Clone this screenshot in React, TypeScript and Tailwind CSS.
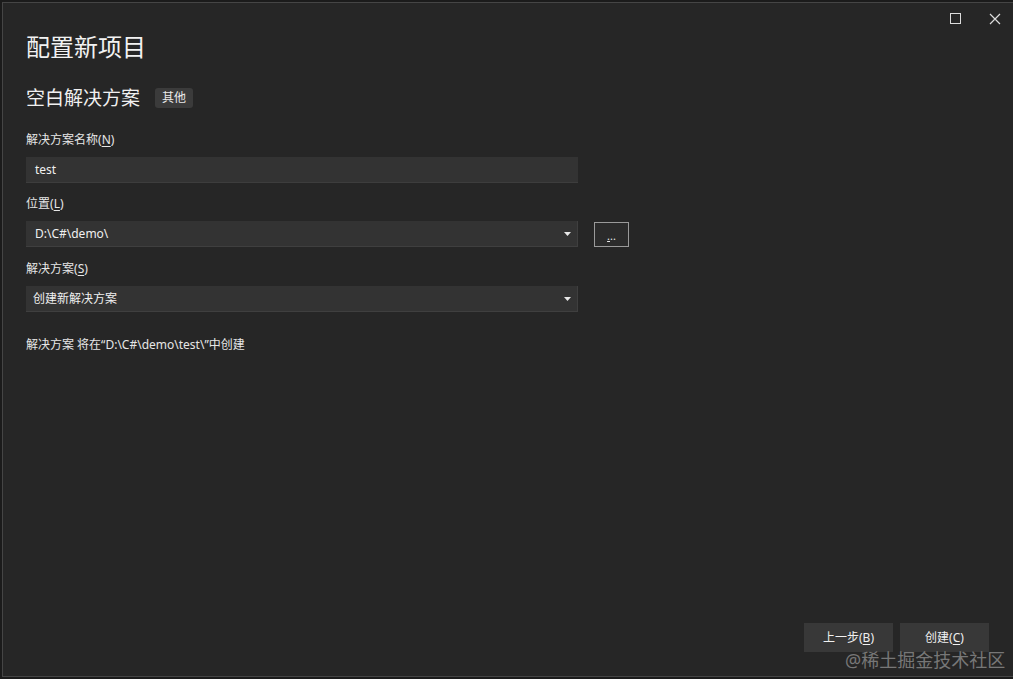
import React from "react";

const font = { fontFamily: '"Noto Sans", "Noto Sans CJK SC", sans-serif' };

function Caret() {
  return (
    <svg width="7" height="4" viewBox="0 0 7 4" className="mr-[6px]">
      <path d="M0 0 H7 L3.5 4 Z" fill="#e8e8e8" />
    </svg>
  );
}

function Label({ children, u }: { children: React.ReactNode; u: string }) {
  return (
    <div className="text-[12px] leading-[16px] text-[#e6e6e6]">
      {children}(<span className="underline underline-offset-2">{u}</span>)
    </div>
  );
}

export default function App() {
  return (
    <div className="w-[1013px] h-[679px] bg-[#1b1b1b] overflow-hidden relative" style={font}>
      <div className="ml-[2px] mt-[2px] h-[675px] w-[1011px] bg-[#262626] border-t border-l border-b border-[#454545] flex flex-col">
        <div className="h-[28px] flex justify-end items-center pr-[12px] gap-[28px] shrink-0">
          <div className="w-[11px] h-[11px] border border-[#dcdcdc] mt-[3px]" />
          <svg width="12" height="12" viewBox="0 0 12 12" className="mt-[3px]">
            <path d="M1 1 L11 11 M11 1 L1 11" stroke="#dcdcdc" strokeWidth="1.2" />
          </svg>
        </div>
        <div className="pl-[23px] flex flex-col flex-1">
          <div className="text-[24px] leading-[32px] text-[#f2f2f2]">配置新项目</div>
          <div className="mt-[21px] flex items-center h-[28px]">
            <span className="text-[19px] leading-[28px] text-[#f0f0f0]">空白解决方案</span>
            <span className="ml-[15px] h-[20px] px-[7px] flex items-center rounded-[3px] bg-[#3b3b3b] text-[12px] text-[#eaeaea]">
              其他
            </span>
          </div>
          <div className="mt-[20px]">
            <Label u="N">解决方案名称</Label>
          </div>
          <div className="mt-[9px] w-[552px] h-[26px] bg-[#333333] border-b border-[#3d3d3d] flex items-center pl-[9px] text-[12px] text-[#f0f0f0]">
            test
          </div>
          <div className="mt-[13px]">
            <Label u="L">位置</Label>
          </div>
          <div className="mt-[9px] flex items-center">
            <div className="w-[552px] h-[26px] bg-[#333333] border-b border-r border-[#3f3f3f] flex items-center justify-between pl-[9px] text-[12px] text-[#f0f0f0]">
              <span>D:\C#\demo\</span>
              <Caret />
            </div>
            <div className="ml-[16px] w-[35px] h-[25px] border border-[#9a9a9a] bg-[#2b2b2b] flex items-center justify-center text-[11px] leading-none text-[#e8e8e8]">
              <span className="mt-[2px]">
                <span className="underline underline-offset-1">.</span>..
              </span>
            </div>
          </div>
          <div className="mt-[14px]">
            <Label u="S">解决方案</Label>
          </div>
          <div className="mt-[9px] w-[552px] h-[26px] bg-[#333333] border-b border-r border-[#3f3f3f] flex items-center justify-between pl-[7px] text-[12px] text-[#f0f0f0]">
            <span>创建新解决方案</span>
            <Caret />
          </div>
          <div className="mt-[25px] text-[12px] leading-[16px] text-[#e6e6e6]">
            解决方案 将在“D:\C#\demo\test\”中创建
          </div>
          <div className="flex-1" />
          <div className="flex justify-end gap-[7px] pr-[24px] pb-[24px]">
            <div className="w-[89px] h-[29px] bg-[#383838] flex items-center justify-center text-[12px] text-[#f0f0f0]">
              上一步(<span className="underline underline-offset-2">B</span>)
            </div>
            <div className="w-[89px] h-[29px] bg-[#383838] flex items-center justify-center text-[12px] text-[#f0f0f0]">
              创建(<span className="underline underline-offset-2">C</span>)
            </div>
          </div>
        </div>
      </div>
      <div className="absolute left-[845px] top-[648px] text-[18px] leading-[24px] text-[#9a9a9a] opacity-70 whitespace-nowrap">
        @稀土掘金技术社区
      </div>
    </div>
  );
}
